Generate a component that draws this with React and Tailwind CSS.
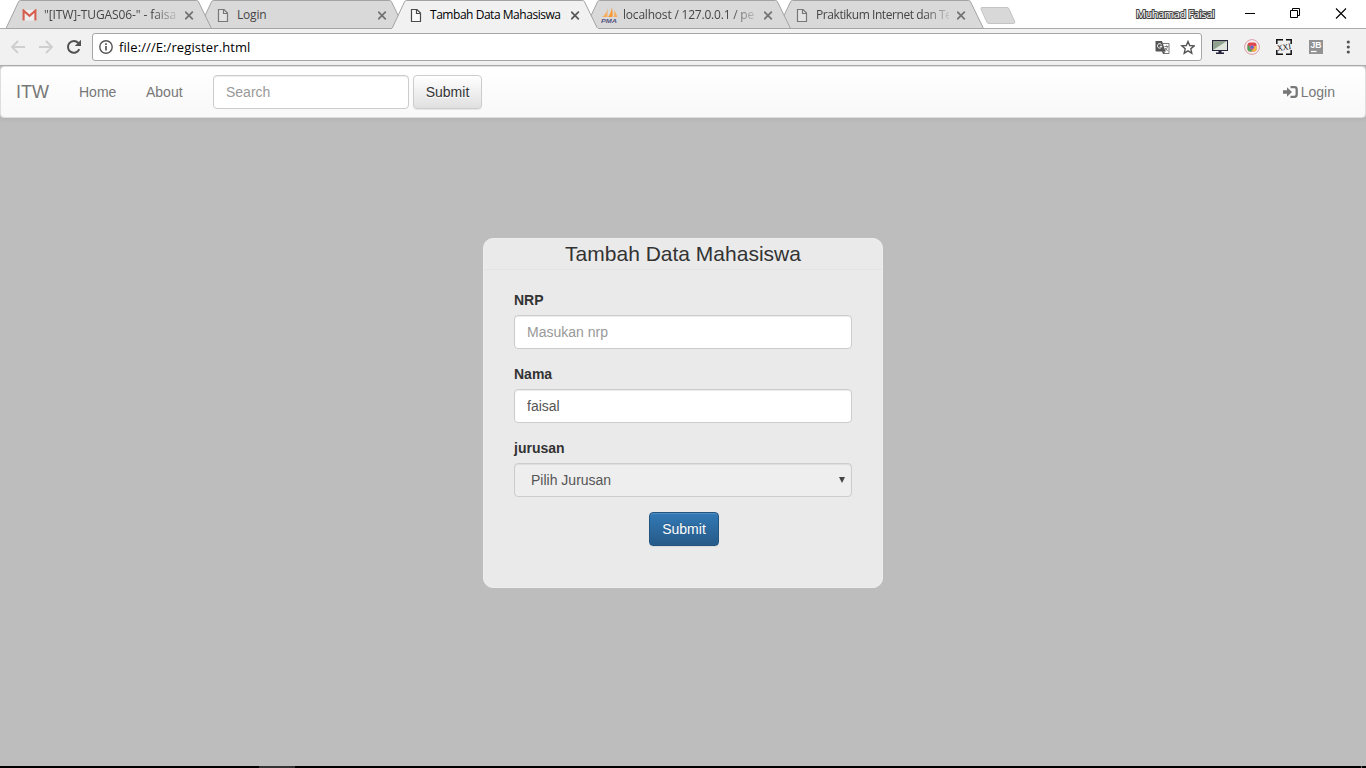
import React from "react";

const UI = "font-['Open_Sans','Noto_Sans',sans-serif]";

const PageIcon = ({ dark }) => (
  <svg width="12" height="15" viewBox="0 0 12 15" fill="none" stroke={dark ? "#4a4a4a" : "#777"} strokeWidth="1.2">
    <path d="M1.500 1.500h5.500l3.500 3.500v8.500h-9z" fill={dark ? "#fafafa" : "#e2e2e2"} />
    <path d="M6.500 1.500v4h4" />
  </svg>
);

const GmailIcon = () => (
  <svg width="15" height="12" viewBox="0 0 15 12">
    <path d="M1 1h13v10.5H1z" fill="#eee" />
    <path d="M1.6 11.5V1.6l5.9 5.2 5.9-5.2v9.9" fill="none" stroke="#d6604f" strokeWidth="2.1" />
  </svg>
);

const PmaIcon = () => (
  <svg width="17" height="16" viewBox="0 0 17 16">
    <path d="M6.500 1v9H1C4 8 6 5 6.500 1z" fill="#f6ad62" />
    <path d="M10.500 0c.2 4-1.500 7.500-3.500 10h4.500c.500-3 .200-6.500-1-10z" fill="#fb9a35" />
    <path d="M13 3c.5 2.500.4 4.500-.3 7h3.800C15.700 7.500 14.500 5 13 3z" fill="#f6ad62" />
    <text x="0" y="15.5" fontSize="6" fontWeight="bold" fontStyle="italic" fontFamily="Liberation Sans, sans-serif" textLength="16" lengthAdjust="spacingAndGlyphs" fill="#55557f">PMA</text>
  </svg>
);

const tabs = [
  { title: "\"[ITW]-TUGAS06-\" - faisa", icon: <GmailIcon />, z: "z-20", pad: "pl-4", fade: true, track: "tracking-[-0.1px]", gap: "w-[22px]" },
  { title: "Login", icon: <PageIcon />, z: "z-10", pad: "pl-[18px]", track: "tracking-[-0.2px]", gap: "w-5" },
  { title: "Tambah Data Mahasiswa", icon: <PageIcon dark />, z: "z-30", pad: "pl-[18px]", active: true, track: "tracking-[-0.46px]", gap: "w-5" },
  { title: "localhost / 127.0.0.1 / pe", icon: <PmaIcon />, z: "z-20", pad: "pl-4", fade: true, track: "tracking-[-0.2px]", gap: "w-[22px]" },
  { title: "Praktikum Internet dan Te", icon: <PageIcon />, z: "z-10", pad: "pl-[18px]", fade: true, track: "tracking-[-0.43px]", gap: "w-5" },
];

function Tab({ tab }) {
  return (
    <div className={`relative h-[29px] w-[193px] shrink-0 ${tab.z}`}>
      <svg className="absolute top-0 left-0" width="206" height="29" viewBox="0 0 206 29">
        <path
          d="M0 28.500L12.500 1.800Q13 .5 14.500 .5H190.500Q192 .5 192.500 1.800L205.500 28.500"
          fill={tab.active ? "#f1f1f1" : "#d9d9d9"}
          stroke="#a3a3a3"
        />
        {tab.active ? <path d="M0 28.500H206" stroke="#f1f1f1" /> : <path d="M0 28.500H206" stroke="#a5a5a5" />}
      </svg>
      <div className={`relative flex h-[30px] items-center ${tab.pad}`}>
        <div className={`flex shrink-0 ${tab.gap}`}>{tab.icon}</div>
        <div className={`w-[133px] shrink-0 text-xs whitespace-nowrap ${UI} ${tab.track} ${tab.active ? "text-black" : "text-[#454545]"} ${tab.fade ? "[mask-image:linear-gradient(to_right,black_108px,transparent_137px)]" : ""}`}>
          {tab.title}
        </div>
        <svg className="ml-[7.5px] shrink-0" width="9" height="9" viewBox="0 0 9 9" stroke={tab.active ? "#5a5a5a" : "#737373"} strokeWidth="1.7">
          <path d="M.2.7l7.600 7.600M7.800.7L.2 8.300" />
        </svg>
      </div>
    </div>
  );
}

function TitleBar() {
  return (
    <header className="flex h-[29px] border-b border-[#acacac] bg-white pl-[6px]">
      <div className="flex h-[29px]">
        {tabs.map((t) => <Tab key={t.title} tab={t} />)}
      </div>
      <svg className="mt-[6px] ml-[9px]" width="36" height="19" viewBox="0 0 36 19">
        <path d="M2 1.500h25q1.500 0 2 1.500l5.500 12q1 2.500-1 2.500H9q-1.500 0-2.200-1.500L1 3Q.5 1.500 2 1.500z" fill="#d8d8d8" stroke="#c4c4c4" />
      </svg>
      <div className={`mt-[6px] ml-auto h-4 w-[81px] text-[11px] leading-4 tracking-[-0.4px] whitespace-nowrap text-white [-webkit-text-stroke:2px_#444] [paint-order:stroke_fill] ${UI}`}>
        Muhamad Faisal
      </div>
      <svg className="mt-[7px] mr-[18px] ml-7" width="103" height="13" viewBox="0 0 103 13" fill="none" stroke="#000">
        <path d="M0 6.500h10" />
        <path d="M45.500 3.500h7v7h-7zM47.500 3.500v-2h7v7h-2" />
        <path d="M91 1.500l10 10M101 1.500l-10 10" strokeWidth="1.1" />
      </svg>
    </header>
  );
}

function Toolbar() {
  return (
    <div className="flex h-[37px] items-center border-b border-[#b0b0b0] bg-[#f1f1f1]">
      <svg className="ml-[10px] shrink-0" width="44" height="14" viewBox="0 0 44 14" fill="none" stroke="#cfcfcf" strokeWidth="1.8">
        <path d="M15 7H2.500M8 1L2 7l6 6M29 7h12.500M36 1l6 6-6 6" />
      </svg>
      <svg className="ml-3 shrink-0" width="16" height="16" viewBox="0 0 16 16">
        <path d="M13.300 10.200A5.900 5.900 0 1 1 12.300 4" fill="none" stroke="#505050" strokeWidth="2" />
        <path d="M15 .8V7H8.800z" fill="#505050" />
      </svg>
      <div className="ml-[10px] flex h-[28px] w-[1110px] shrink-0 items-center rounded-[3px] border border-[#a6a6a6] bg-white pl-[6px]">
        <svg width="14" height="14" viewBox="0 0 14 14" fill="none" stroke="#555" strokeWidth="1.400">
          <circle cx="7" cy="7" r="6.200" />
          <path d="M7 6v4.500M7 3.200v1.700" strokeWidth="1.700" />
        </svg>
        <span className={`mt-px ml-[6px] text-[13px] tracking-[0.1px] text-black ${UI}`}>file:///E:/register.html</span>
        <svg className="ml-auto" width="16" height="15" viewBox="0 0 16 15">
          <path d="M6 3.500h8v10H8z" fill="#fff" stroke="#777" />
          <path d="M.5 1h6.500l3.500 10.500H1.500q-1 0-1-1z" fill="#555" />
          <path d="M6.500 4.700A2.200 2.200 0 1 0 6.800 6.300H4.800" fill="none" stroke="#fff" />
          <path d="M9.500 6.500h4M11.500 5.500v1M10 10.500c1.400-1 2.200-2.300 2.500-4M10.200 8l2.400 3" fill="none" stroke="#777" />
          <path d="M7.500 11.500h3L8.300 14z" fill="#555" />
        </svg>
        <svg className="mr-[6px] ml-[9px]" width="15" height="15" viewBox="0 0 15 15">
          <path d="M8 1.500l1.700 4 4.500.4-3.400 2.900 1 4.400L8 10.900l-3.800 2.300 1-4.400L1.800 5.900l4.500-.4z" fill="#fff" stroke="#555" strokeWidth="1.400" />
        </svg>
      </div>
      <svg className="ml-[10px] shrink-0" width="16" height="14" viewBox="0 0 16 14">
        <path d="M0 0h16v11H0z" fill="#25223a" />
        <path d="M1 1h14v9H1z" fill="#dfe5dd" />
        <path d="M1 1h14L1 10z" fill="#90a18f" />
        <path d="M6.500 11h3v1.500H12V14H4v-1.500h2.500z" fill="#25223a" />
      </svg>
      <svg className="ml-4 shrink-0" width="16" height="16" viewBox="0 0 16 16">
        <circle cx="8" cy="8" r="7.400" fill="#f7eeee" stroke="#dc9cab" />
        <rect x="3.500" y="3.500" width="9" height="9" rx="2.500" fill="#e0484f" />
        <path d="M3.500 6l3.500 2 1 4.500H6q-2.500 0-2.500-2.500z" fill="#49a65b" />
        <path d="M12.500 7H9l-1 5.500h2q2.500 0 2.500-2.500z" fill="#edbd3e" />
        <circle cx="8" cy="8.200" r="2.300" fill="#d9559c" /><circle cx="8" cy="8.200" r="1.400" fill="#4c72c4" />
      </svg>
      <svg className="ml-4 shrink-0" width="16" height="16" viewBox="0 0 16 16" fill="none" stroke="#111">
        <path d="M.8 5V.8H7M10 .8h5.200V5M15.200 11v4.200H10M7 15.200H.8V11" strokeWidth="1.500" />
        <text x="1" y="11" textLength="14" lengthAdjust="spacingAndGlyphs" fontSize="8.500" fontFamily="Liberation Serif, serif" fill="#111" stroke="none" transform="rotate(-8 8 8)">XXI</text>
      </svg>
      <svg className="ml-[17px] shrink-0" width="14" height="14" viewBox="0 0 14 14">
        <path d="M0 0h14v14H0z" fill="#929292" />
        <text x="1.500" y="8.300" textLength="11" lengthAdjust="spacingAndGlyphs" fontSize="9" fontWeight="bold" fontFamily="Liberation Sans, sans-serif" fill="#fff">JB</text>
        <path d="M2 11.500h5.500" stroke="#fff" strokeWidth="1.300" />
      </svg>
      <svg className="ml-[23px] shrink-0" width="4" height="14" viewBox="0 0 4 14" fill="#555">
        <circle cx="2.300" cy="2" r="1.600" /><circle cx="2.300" cy="7" r="1.600" /><circle cx="2.300" cy="12" r="1.600" />
      </svg>
    </div>
  );
}

function Navbar() {
  return (
    <nav className="flex h-[52px] items-center rounded border border-[#dedede] bg-linear-to-b from-white to-[#f8f8f8] pl-[15px] text-sm text-[#777] shadow-[inset_0_1px_0_rgba(255,255,255,.15),0_1px_5px_rgba(0,0,0,.075)]">
      <a className="w-[63px] text-lg">ITW</a>
      <a className="w-[67px]">Home</a>
      <a className="w-[67px]">About</a>
      <input
        placeholder="Search"
        className="h-[34px] w-[196px] rounded border border-[#ccc] bg-white px-3 text-sm shadow-[inset_0_1px_1px_rgba(0,0,0,.075)] placeholder:text-[#999]"
      />
      <button className="ml-1 h-[34px] w-[69px] rounded border border-[#ccc] bg-linear-to-b from-white to-[#e0e0e0] text-sm text-[#333] shadow-[inset_0_1px_0_rgba(255,255,255,.15),0_1px_1px_rgba(0,0,0,.075)] [text-shadow:0_1px_0_#fff]">
        Submit
      </button>
      <a className="mr-[30px] ml-auto flex items-center gap-[3px]">
        <svg width="15" height="12" viewBox="0 0 15 12">
          <path d="M0 4.200h4V1.300L9 6 4 10.700V7.800H0z" fill="#777" />
          <path d="M7.500 1.200h4q2.200 0 2.200 2.200v5.200q0 2.200-2.200 2.200h-4" fill="none" stroke="#777" strokeWidth="2.300" />
        </svg>
        Login
      </a>
    </nav>
  );
}

function Field({ label, children }) {
  return (
    <div className="mb-[15px]">
      <label className="mb-[5px] block text-sm leading-5 font-bold text-[#333]">{label}</label>
      {children}
    </div>
  );
}

const control =
  "h-[34px] w-full rounded border border-[#ccc] px-3 text-sm text-[#555] shadow-[inset_0_1px_1px_rgba(0,0,0,.075)] placeholder:text-[#999]";

export default function App() {
  return (
    <div className="flex h-[768px] w-[1366px] flex-col overflow-hidden bg-[#bdbdbd] font-['Liberation_Sans',Arial,sans-serif]">
      <TitleBar />
      <Toolbar />
      <Navbar />
      <main className="flex-1">
        <form className="mx-auto mt-[120px] h-[350px] w-[400px] rounded-[10px] border border-[#eee] bg-[#eaeaea]">
          <h1 className="h-[31px] border-b border-[#e3e3e3] text-center text-[21px] leading-[29px] text-[#333]">Tambah Data Mahasiswa</h1>
          <div className="px-[30px] pt-5">
            <Field label="NRP">
              <input placeholder="Masukan nrp" className={`${control} bg-white`} />
            </Field>
            <Field label="Nama">
              <input defaultValue="faisal" className={`${control} bg-white`} />
            </Field>
            <Field label="jurusan">
              <div className={`${control} flex items-center justify-between bg-[#eee] pr-[6px] pl-4`}>
                Pilih Jurusan
                <svg width="6" height="6" viewBox="0 0 6 6" fill="#444"><path d="M0 0h6L3 6z" /></svg>
              </div>
            </Field>
            <button
              type="button"
              className="ml-[135px] block h-[34px] w-[70px] rounded border border-[#245580] bg-linear-to-b from-[#337ab7] to-[#265a88] text-sm text-white shadow-[inset_0_1px_0_rgba(255,255,255,.15),0_1px_1px_rgba(0,0,0,.075)] [text-shadow:0_-1px_0_rgba(0,0,0,.2)]"
            >
              Submit
            </button>
          </div>
        </form>
      </main>
      <footer className="flex h-[2px] bg-black">
        <div className="ml-[259px] h-full w-9 bg-[#333]" />
        <div className="mr-1 ml-auto h-full w-px bg-[#666]" />
      </footer>
    </div>
  );
}
